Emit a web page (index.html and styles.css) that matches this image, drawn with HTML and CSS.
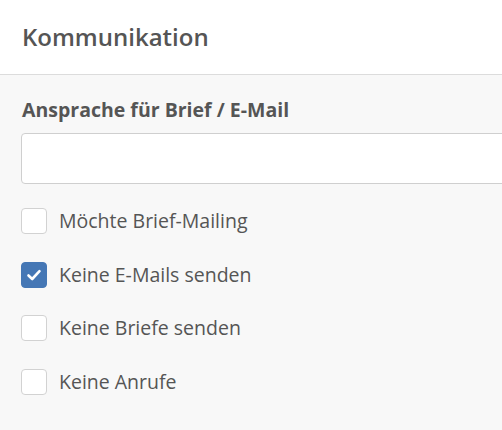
FILE: index.html
```html
<!DOCTYPE html>
<html lang="de">
<head>
<meta charset="utf-8">
<link rel="stylesheet" href="styles.css">
</head>
<body>
<div class="panel">
  <div class="panel-header">
    <h2 class="panel-title">Kommunikation</h2>
  </div>
  <div class="panel-body">
    <label class="field-label" for="anrede">Ansprache für Brief / E-Mail</label>
    <input class="text-input" id="anrede" type="text">
    <ul class="checks">
      <li class="check-row"><span class="box"></span><span class="check-text">Möchte Brief-Mailing</span></li>
      <li class="check-row"><span class="box checked"><svg viewBox="0 0 26 26" width="26" height="26"><path d="M7.5 13.5 L11.2 17 L18.5 9.2" fill="none" stroke="#fff" stroke-width="2.6" stroke-linecap="round" stroke-linejoin="round"/></svg></span><span class="check-text">Keine E-Mails senden</span></li>
      <li class="check-row"><span class="box"></span><span class="check-text">Keine Briefe senden</span></li>
      <li class="check-row"><span class="box"></span><span class="check-text">Keine Anrufe</span></li>
    </ul>
  </div>
</div>
</body>
</html>
```
FILE: styles.css
```css
html, body {
  margin: 0;
  padding: 0;
  background: #f8f8f8;
  font-family: "Open Sans", "DejaVu Sans", sans-serif;
  color: #555;
  overflow: hidden;
}
.panel {
  width: 100%;
  overflow: hidden;
}
.panel-header {
  background: #fff;
  height: 74px;
  border-bottom: 1px solid #dcdcdc;
  display: flex;
  align-items: center;
  padding-left: 22px;
}
.panel-title {
  margin: 0;
  font-size: 24px;
  font-weight: 600;
  color: #555;
  line-height: 32px;
  padding-bottom: 1px;
}
.panel-body {
  padding: 22px 0 0 21px;
}
.field-label {
  display: block;
  font-size: 19.5px;
  font-weight: 700;
  line-height: 26px;
  color: #555;
  margin-bottom: 10px;
  padding-left: 1px;
}
.text-input {
  display: block;
  box-sizing: border-box;
  width: 520px;
  height: 51px;
  border: 1px solid #cfcfcf;
  border-radius: 4px;
  background: #fff;
  margin: 0;
  outline: none;
}
.checks {
  list-style: none;
  margin: 24px 0 0 0;
  padding: 0;
  display: flex;
  flex-direction: column;
  gap: 27.5px;
}
.check-row {
  display: flex;
  align-items: center;
  gap: 12px;
  height: 26px;
}
.box {
  box-sizing: border-box;
  width: 26px;
  height: 26px;
  border: 1px solid #d2d2d2;
  border-radius: 4px;
  background: #fff;
  display: block;
  flex: none;
}
.box.checked {
  background: #4577b5;
  border-color: #4577b5;
}
.box svg {
  display: block;
  margin: -1px;
}
.check-text {
  font-size: 19.5px;
  line-height: 26px;
  color: #555;
}
```
